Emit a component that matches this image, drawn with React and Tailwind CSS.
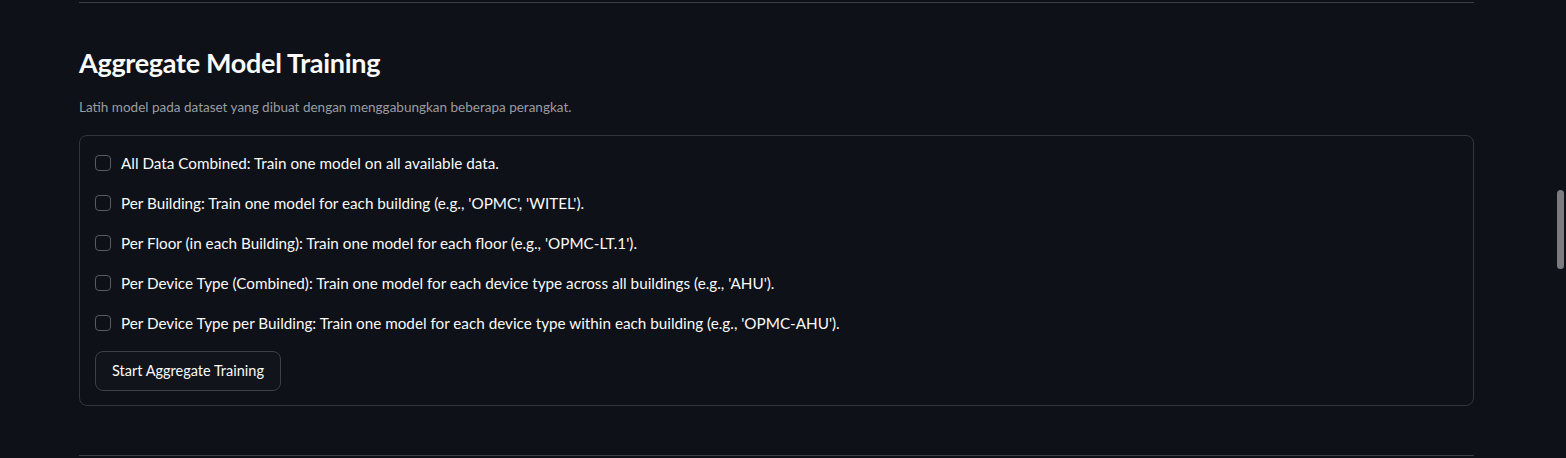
import React from "react";

const options = [
  "All Data Combined: Train one model on all available data.",
  "Per Building: Train one model for each building (e.g., 'OPMC', 'WITEL').",
  "Per Floor (in each Building): Train one model for each floor (e.g., 'OPMC-LT.1').",
  "Per Device Type (Combined): Train one model for each device type across all buildings (e.g., 'AHU').",
  "Per Device Type per Building: Train one model for each device type within each building (e.g., 'OPMC-AHU').",
];

export default function App() {
  return (
    <div
      className="w-[1566px] h-[458px] bg-[#0e1117] text-[#fafafa] overflow-hidden relative"
      style={{ fontFamily: "Lato, 'Noto Sans', sans-serif" }}
    >
      <div className="pl-[79px] w-[1474px] pt-[2px]">
        <div className="h-px bg-[#3b3e45]" />
        <h3 className="mt-[40px] h-[40px] leading-[40px] text-[27px] font-bold tracking-[-0.3px]">
          Aggregate Model Training
        </h3>
        <p className="mt-[14px] h-[20px] leading-[20px] text-[13.5px] text-[#9a9ca1]">
          Latih model pada dataset yang dibuat dengan menggabungkan beberapa perangkat.
        </p>
        <div className="mt-[18px] border border-[#33363d] rounded-[8px] pl-[15px] pt-[7px] pb-[14px]">
          {options.map((o) => (
            <label key={o} className="flex items-center h-[40px] gap-[10px] cursor-pointer">
              <span className="w-[16px] h-[16px] rounded-[4px] border border-[#595b61] bg-[#0e1117] shrink-0" />
              <span className="text-[15.25px] leading-[20px]">{o}</span>
            </label>
          ))}
          <button className="mt-[8px] h-[40px] px-[16px] rounded-[8px] border border-[#3d4047] bg-[#11141a] text-[14.5px] text-[#fafafa]">
            Start Aggregate Training
          </button>
        </div>
        <div className="mt-[49px] h-px bg-[#3b3e45]" />
      </div>
      <div className="absolute left-[1557px] top-[190px] w-[7px] h-[79px] rounded-full bg-[#7b7c80]" />
    </div>
  );
}
